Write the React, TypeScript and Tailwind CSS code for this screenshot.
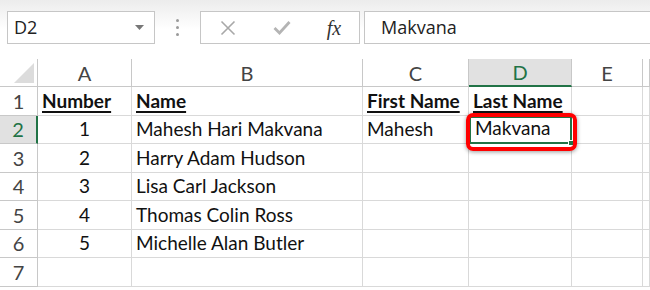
const cols = ['A', 'B', 'C', 'D', 'E', ''];

const rows: string[][] = [
  ['Number', 'Name', 'First Name', 'Last Name', '', ''],
  ['1', 'Mahesh Hari Makvana', 'Mahesh', 'Makvana', '', ''],
  ['2', 'Harry Adam Hudson', '', '', '', ''],
  ['3', 'Lisa Carl Jackson', '', '', '', ''],
  ['4', 'Thomas Colin Ross', '', '', '', ''],
  ['5', 'Michelle Alan Butler', '', '', '', ''],
  ['', '', '', '', '', ''],
];

export default function App() {
  return (
    <div className="relative w-[650px] h-[290px] overflow-hidden bg-white text-[#111] font-['Lato',sans-serif]">
      {/* Formula bar */}
      <div className="h-[59px] bg-gradient-to-b from-[#ececec] via-white to-white pt-[11px] flex items-start">
        <div className="ml-[7px] w-[148px] h-[33px] border border-[#c6c6c6] bg-white flex items-center pl-[6px] pr-[8px]">
          <span className="flex-1 text-[18px] text-[#222] font-['Open_Sans',sans-serif]">D2</span>
          <svg width="9" height="5" viewBox="0 0 9 5" className="mr-[2px]">
            <path d="M0 0 L9 0 L4.5 5 Z" fill="#777" />
          </svg>
        </div>
        <div className="w-[45px] h-[33px] flex flex-col items-center justify-center gap-[4px]">
          <span className="w-[3px] h-[3px] rounded-full bg-[#9a9a9a]" />
          <span className="w-[3px] h-[3px] rounded-full bg-[#9a9a9a]" />
          <span className="w-[3px] h-[3px] rounded-full bg-[#9a9a9a]" />
        </div>
        <div className="w-[160px] h-[33px] border border-[#c6c6c6] bg-white flex items-center">
          <div className="w-[54px] flex justify-center">
            <svg width="16" height="16" viewBox="0 0 16 16">
              <path d="M1.5 1.5 L14.5 14.5 M14.5 1.5 L1.5 14.5" stroke="#a8a8a8" strokeWidth="1.6" />
            </svg>
          </div>
          <div className="w-[54px] flex justify-center">
            <svg width="18" height="15" viewBox="0 0 18 15">
              <path d="M1.5 8 L6.5 13 L16.5 2" stroke="#b4b4b4" strokeWidth="2.8" fill="none" />
            </svg>
          </div>
          <div className="flex-1 flex justify-center">
            <span className="italic text-[20px] text-[#333] font-['Liberation_Serif',serif]">fx</span>
          </div>
        </div>
        <div className="ml-[4px] flex-1 h-[33px] border border-[#c6c6c6] border-r-0 bg-white flex items-center pl-[16px]">
          <span className="text-[18px] text-[#222] font-['Open_Sans',sans-serif]">Makvana</span>
        </div>
      </div>

      {/* Grid */}
      <div className="grid grid-cols-[38px_94px_231px_106px_103px_71px_1fr]">
        <div className="h-[28px] border-r border-b border-[#c8c8c8] flex items-end justify-end pr-[3px] pb-[3px]">
          <svg width="20" height="20" viewBox="0 0 20 20">
            <path d="M20 0 L20 20 L0 20 Z" fill="#dcdcdc" />
          </svg>
        </div>
        {cols.map((c, i) => (
          <div
            key={i}
            className={
              c === 'D'
                ? 'h-[28px] border-r border-[#c8c8c8] border-b-2 border-b-[#217346] bg-[#e1e1e1] flex items-center justify-center text-[20px] text-[#217346]'
                : 'h-[28px] border-r border-b border-[#c8c8c8] flex items-center justify-center text-[20px] text-[#444]'
            }
          >
            {c}
          </div>
        ))}

        {rows.map((r, ri) => (
          <Row key={ri} n={ri + 1} cells={r} />
        ))}
      </div>

      {/* Red highlight around D2 */}
      <div className="absolute left-[466px] top-[113px] w-[111px] h-[38px] border-[4px] border-[#f00] rounded-[7px] shadow-[0_1px_4px_rgba(0,0,0,0.4)]" />
    </div>
  );
}

function Row({ n, cells }: { n: number; cells: string[] }) {
  const selected = n === 2;
  return (
    <>
      <div
        className={
          selected
            ? 'h-[28.5px] border-b border-[#c8c8c8] border-r-2 border-r-[#217346] bg-[#e1e1e1] flex items-center justify-center text-[20px] text-[#217346]'
            : 'h-[28.5px] border-r border-b border-[#c8c8c8] flex items-center justify-center text-[20px] text-[#444]'
        }
      >
        {n}
      </div>
      {cells.map((v, ci) => {
        const isHeader = n === 1;
        const isActive = n === 2 && ci === 3;
        const base = 'h-[28.5px] flex items-end pb-[1px] text-[19px] leading-[26px] whitespace-nowrap overflow-visible';
        const align = ci === 0 && !isHeader ? 'justify-center' : 'pl-[4px]';
        const border = isActive
          ? 'relative border-2 border-[#217346] pl-[3px]'
          : 'border-r border-b border-[#d9d9d9]';
        return (
          <div key={ci} className={`${base} ${align} ${border}`}>
            {isHeader && v ? <span className="font-bold underline underline-offset-[3px] decoration-[1.5px]">{v}</span> : v}
            {isActive && (
              <span className="absolute right-[-4px] bottom-[-4px] w-[6px] h-[6px] bg-[#217346] border border-white" />
            )}
          </div>
        );
      })}
    </>
  );
}
